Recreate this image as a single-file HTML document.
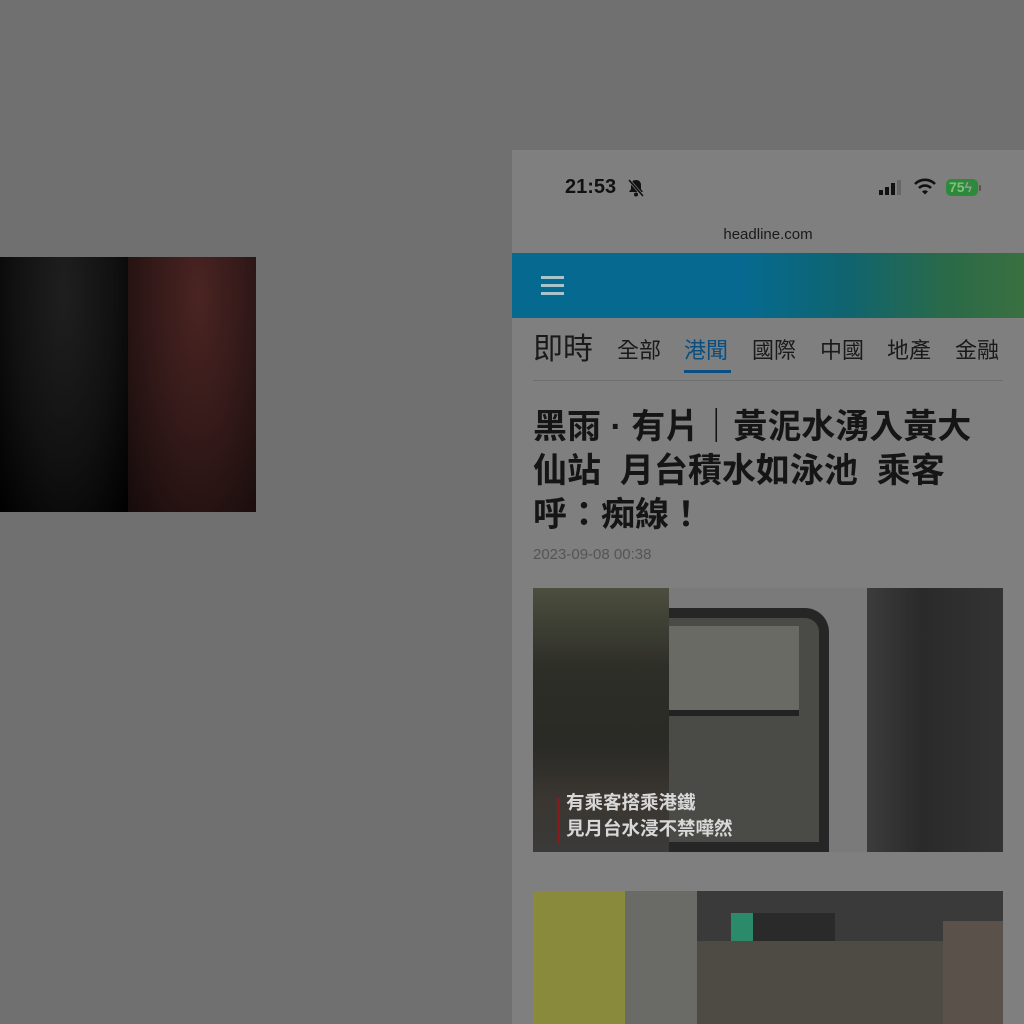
<!DOCTYPE html>
<html><head><meta charset="utf-8"><style>
*{margin:0;padding:0;box-sizing:border-box}
body{width:1024px;height:1024px;background:#707070;position:relative;overflow:hidden;font-family:"Liberation Sans","Noto Sans CJK TC",sans-serif}
.abs{position:absolute}
.phone{left:512px;top:150px;width:512px;height:874px;background:#7f7f7f;overflow:hidden}
.cjk{font-family:"Liberation Sans","Noto Sans CJK TC",sans-serif}
</style></head><body>
<div class="abs" style="left:0;top:257px;width:128px;height:255px;background:radial-gradient(ellipse at 50% 15%,#1e1f1e 0%,#111 55%,#000 100%)"></div>
<div class="abs" style="left:128px;top:257px;width:128px;height:255px;background:radial-gradient(ellipse at 55% 15%,#4a2422 0%,#341a19 45%,#150b0b 100%)"></div>

<div class="abs phone">
  <div class="abs" style="left:53px;top:26px;font-size:20px;font-weight:bold;color:#111">21:53</div>
  <svg class="abs" style="left:114px;top:28px" width="20" height="20" viewBox="0 0 20 20"><path d="M10 2c-3 0-5 2-5 5v4l-2 3h14l-2-3V7c0-3-2-5-5-5z" fill="#111"/><circle cx="10" cy="16.5" r="2" fill="#111"/><line x1="3" y1="2" x2="17" y2="18" stroke="#7f7f7f" stroke-width="3"/><line x1="3" y1="2" x2="17" y2="18" stroke="#111" stroke-width="1.6"/></svg>
  <div class="abs" style="left:367px;top:40px;width:4px;height:5px;background:#111"></div>
  <div class="abs" style="left:373px;top:37px;width:4px;height:8px;background:#111"></div>
  <div class="abs" style="left:379px;top:33px;width:4px;height:12px;background:#111"></div>
  <div class="abs" style="left:385px;top:30px;width:4px;height:15px;background:#666"></div>
  <svg class="abs" style="left:402px;top:28px" width="22" height="18" viewBox="0 0 22 18"><path d="M1 6a14 14 0 0 1 20 0" stroke="#111" stroke-width="2.6" fill="none"/><path d="M5 10a8.5 8.5 0 0 1 12 0" stroke="#111" stroke-width="2.6" fill="none"/><path d="M8 13.5l3 3 3-3a4.2 4.2 0 0 0-6 0z" fill="#111"/></svg>
  <div class="abs" style="left:434px;top:29px;width:32px;height:17px;border-radius:5px;background:#2e8a3a;color:#7fc27f;font-size:14px;font-weight:bold;line-height:17px;padding-left:3px">75<span style="color:#999">ϟ</span></div>
  <div class="abs" style="left:467px;top:35px;width:2px;height:6px;background:#555;border-radius:1px"></div>
  <div class="abs" style="left:0;top:76px;width:512px;text-align:center;font-size:15px;color:#1a1a1a">headline.com</div>
  <div class="abs" style="left:0;top:103px;width:512px;height:65px;background:linear-gradient(90deg,#066a90 0%,#066a90 45%,#0f6470 65%,#2a6a48 85%,#3a7040 100%)"></div>
  <div class="abs" style="left:29px;top:126px;width:23px;height:3px;background:#a8c4cc"></div>
  <div class="abs" style="left:29px;top:134px;width:23px;height:3px;background:#a8c4cc"></div>
  <div class="abs" style="left:29px;top:142px;width:23px;height:3px;background:#a8c4cc"></div>
  <div class="abs cjk" style="left:21px;top:180px;font-size:30px;color:#1a1a1a;line-height:40px">即時</div>
  <div class="abs cjk" style="left:105px;top:186px;font-size:22px;color:#1a1a1a;line-height:30px;white-space:nowrap">全部</div>
  <div class="abs cjk" style="left:172px;top:186px;font-size:22px;color:#0a4f80;line-height:30px">港聞</div>
  <div class="abs" style="left:172px;top:220px;width:47px;height:3px;background:#0a4f80"></div>
  <div class="abs cjk" style="left:240px;top:186px;font-size:22px;color:#1a1a1a;line-height:30px">國際</div>
  <div class="abs cjk" style="left:308px;top:186px;font-size:22px;color:#1a1a1a;line-height:30px">中國</div>
  <div class="abs cjk" style="left:375px;top:186px;font-size:22px;color:#1a1a1a;line-height:30px">地產</div>
  <div class="abs cjk" style="left:443px;top:186px;font-size:22px;color:#1a1a1a;line-height:30px">金融</div>
  <div class="abs" style="left:21px;top:230px;width:470px;height:1px;background:#6e6e6e"></div>
  <div class="abs cjk" style="left:21px;top:255px;font-size:34px;font-weight:bold;color:#151515;line-height:44px;white-space:nowrap">黑雨 · 有片｜黃泥水湧入黃大<br>仙站&nbsp; 月台積水如泳池&nbsp; 乘客<br>呼：痴線！</div>
  <div class="abs" style="left:21px;top:396px;font-size:15px;color:#555">2023-09-08 00:38</div>
  <div class="abs" style="left:21px;top:438px;width:470px;height:264px;background:#5a5a5a;overflow:hidden">
    <div class="abs" style="left:0;top:0;width:136px;height:264px;background:linear-gradient(180deg,#4c4e3e 0%,#2e2e28 30%,#2a2a26 60%,#3b3631 80%,#3a3a38 100%)"></div>
    <div class="abs" style="left:136px;top:0;width:198px;height:264px;background:#7a7a7a"></div>
    <div class="abs" style="left:136px;top:20px;width:160px;height:244px;border:10px solid #262626;border-left:none;border-radius:0 24px 0 0;background:#4a4a46"></div>
    <div class="abs" style="left:136px;top:38px;width:130px;height:90px;background:#6a6a64;border-bottom:6px solid #222"></div>
    <div class="abs" style="left:334px;top:0;width:136px;height:264px;background:linear-gradient(90deg,#3c3c3c,#2a2a2a 40%,#333)"></div>
    <div class="abs" style="left:24px;top:210px;width:3px;height:46px;background:#8a1a1a"></div>
    <div class="abs cjk" style="left:33px;top:202px;font-size:18.5px;font-weight:bold;color:#d8d8d8;line-height:26px;white-space:nowrap">有乘客搭乘港鐵<br>見月台水浸不禁嘩然</div>
  </div>
  <div class="abs" style="left:21px;top:741px;width:470px;height:140px;background:#4e4a44;overflow:hidden">
    <div class="abs" style="left:0;top:0;width:92px;height:140px;background:#8a8a3c"></div>
    <div class="abs" style="left:92px;top:0;width:72px;height:140px;background:#6a6a66"></div>
    <div class="abs" style="left:164px;top:0;width:306px;height:50px;background:#3a3a3a"></div>
    <div class="abs" style="left:198px;top:22px;width:104px;height:28px;background:#2a2a2a"></div>
    <div class="abs" style="left:198px;top:22px;width:22px;height:28px;background:#2a8a6a"></div>
    <div class="abs" style="left:410px;top:30px;width:60px;height:110px;background:#5a524a"></div>
  </div>
</div>
</body></html>
